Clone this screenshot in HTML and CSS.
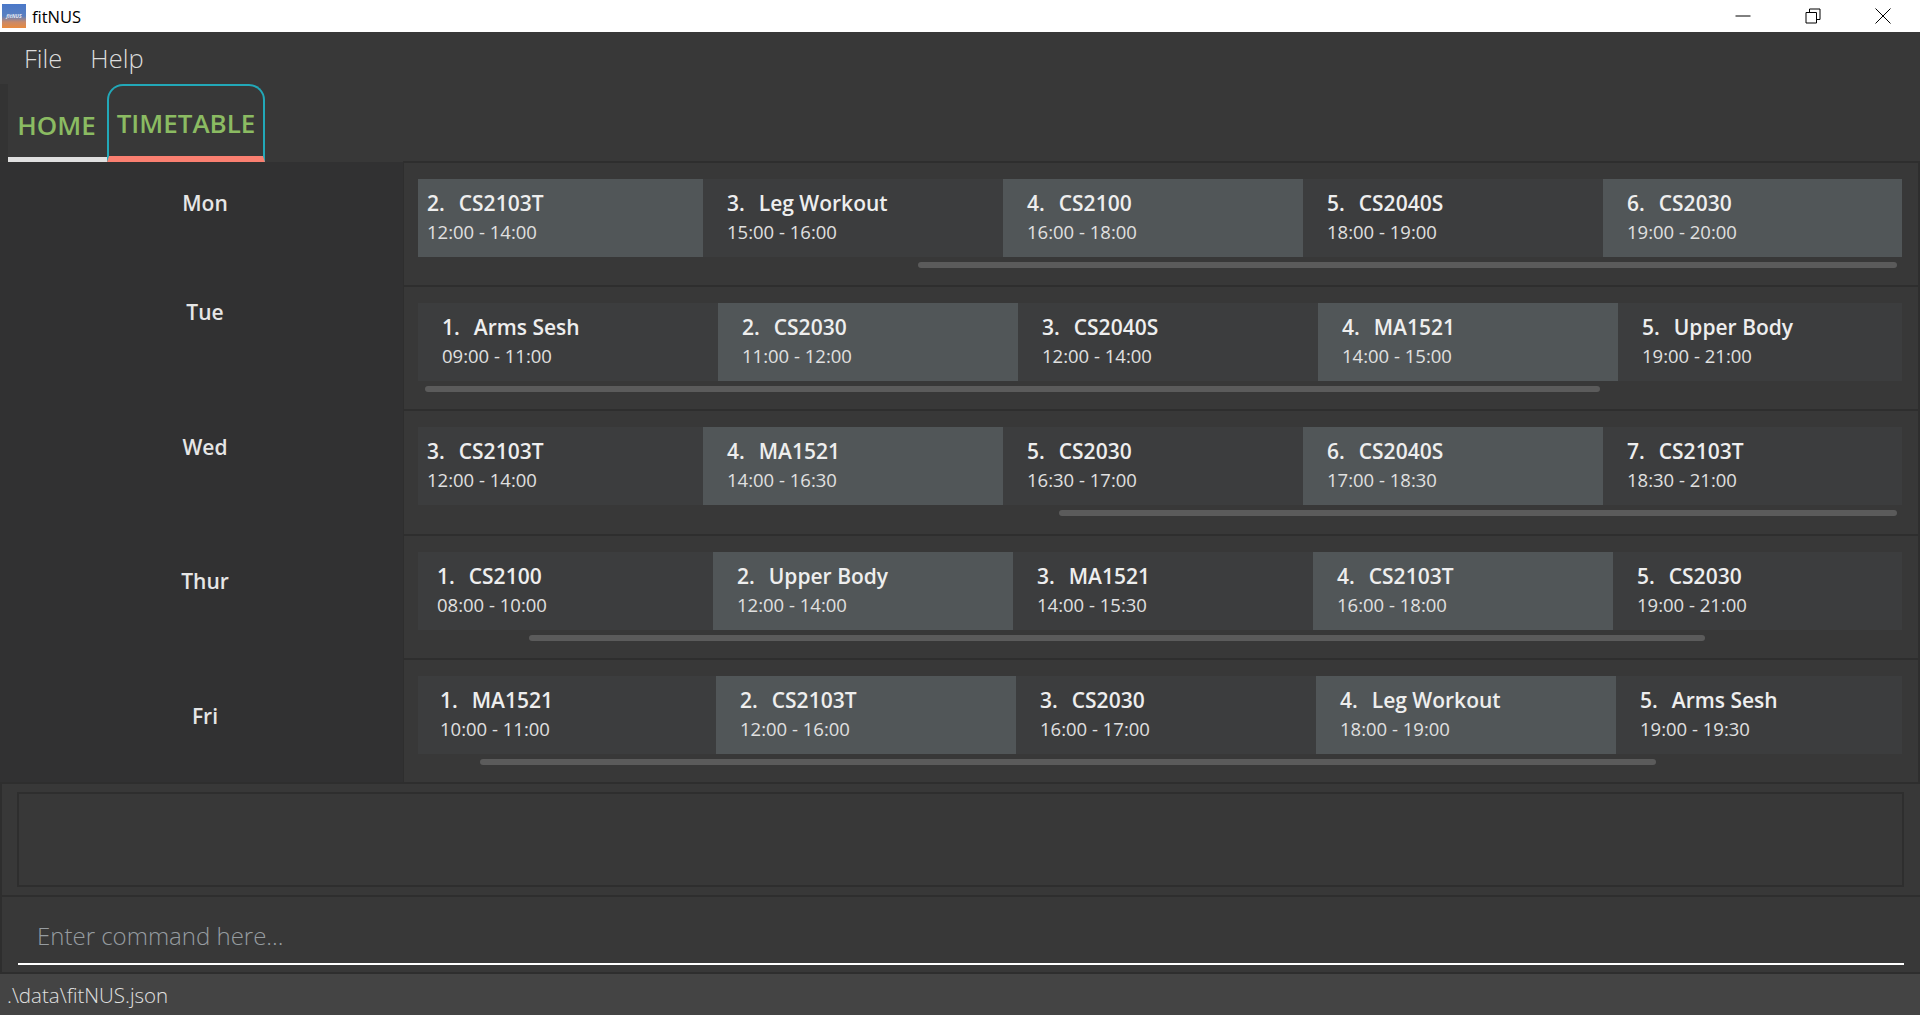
FILE: index.html
```html
<!DOCTYPE html>
<html lang="en">
<head>
    <meta charset="UTF-8">
    <title>fitNUS</title>
    <link rel="stylesheet" href="styles.css">
</head>
<body>
    <div class="titlebar">
        <div class="app-icon"><span>fitNUS</span></div>
        <div class="app-name">fitNUS</div>
        <div class="win-buttons">
            <svg class="win-btn" width="16" height="16" viewBox="0 0 16 16"><path d="M0.5 8H15.5" stroke="#000" fill="none"/></svg>
            <svg class="win-btn" width="16" height="16" viewBox="0 0 16 16"><path d="M1 4.5H11.5V15H1ZM4.5 4.5V1H15V11.5H11.5" stroke="#000" fill="none"/></svg>
            <svg class="win-btn" width="16" height="16" viewBox="0 0 16 16"><path d="M0.5 0.5L15.5 15.5M15.5 0.5L0.5 15.5" stroke="#000" fill="none"/></svg>
        </div>
    </div>

    <div class="menubar">
        <span class="menu-item">File</span>
        <span class="menu-item">Help</span>
    </div>

    <div class="tabbar">
        <div class="tab tab-home"><span>HOME</span></div>
        <div class="tab tab-active"><span>TIMETABLE</span></div>
    </div>

    <div class="main">
        <div class="days">
            <div class="day day-first">Mon</div>
            <div class="day">Tue</div>
            <div class="day">Wed</div>
            <div class="day">Thur</div>
            <div class="day">Fri</div>
        </div>

        <div class="rows">
            <div class="row">
                <div class="viewport">
                    <div class="strip" style="margin-left: -15px">
                        <div class="card light"><div class="title"><span class="num">2.</span>CS2103T</div><div class="time">12:00 - 14:00</div></div>
                        <div class="card"><div class="title"><span class="num">3.</span>Leg Workout</div><div class="time">15:00 - 16:00</div></div>
                        <div class="card light"><div class="title"><span class="num">4.</span>CS2100</div><div class="time">16:00 - 18:00</div></div>
                        <div class="card"><div class="title"><span class="num">5.</span>CS2040S</div><div class="time">18:00 - 19:00</div></div>
                        <div class="card light"><div class="title"><span class="num">6.</span>CS2030</div><div class="time">19:00 - 20:00</div></div>
                    </div>
                </div>
                <div class="track"><div class="thumb" style="margin-left: 500px; width: 979px"></div></div>
            </div>

            <div class="row">
                <div class="viewport">
                    <div class="strip" style="margin-left: 0">
                        <div class="card"><div class="title"><span class="num">1.</span>Arms Sesh</div><div class="time">09:00 - 11:00</div></div>
                        <div class="card light"><div class="title"><span class="num">2.</span>CS2030</div><div class="time">11:00 - 12:00</div></div>
                        <div class="card"><div class="title"><span class="num">3.</span>CS2040S</div><div class="time">12:00 - 14:00</div></div>
                        <div class="card light"><div class="title"><span class="num">4.</span>MA1521</div><div class="time">14:00 - 15:00</div></div>
                        <div class="card"><div class="title"><span class="num">5.</span>Upper Body</div><div class="time">19:00 - 21:00</div></div>
                    </div>
                </div>
                <div class="track"><div class="thumb" style="margin-left: 7px; width: 1175px"></div></div>
            </div>

            <div class="row">
                <div class="viewport">
                    <div class="strip" style="margin-left: -15px">
                        <div class="card"><div class="title"><span class="num">3.</span>CS2103T</div><div class="time">12:00 - 14:00</div></div>
                        <div class="card light"><div class="title"><span class="num">4.</span>MA1521</div><div class="time">14:00 - 16:30</div></div>
                        <div class="card"><div class="title"><span class="num">5.</span>CS2030</div><div class="time">16:30 - 17:00</div></div>
                        <div class="card light"><div class="title"><span class="num">6.</span>CS2040S</div><div class="time">17:00 - 18:30</div></div>
                        <div class="card"><div class="title"><span class="num">7.</span>CS2103T</div><div class="time">18:30 - 21:00</div></div>
                    </div>
                </div>
                <div class="track"><div class="thumb" style="margin-left: 641px; width: 838px"></div></div>
            </div>

            <div class="row">
                <div class="viewport">
                    <div class="strip" style="margin-left: -5px">
                        <div class="card"><div class="title"><span class="num">1.</span>CS2100</div><div class="time">08:00 - 10:00</div></div>
                        <div class="card light"><div class="title"><span class="num">2.</span>Upper Body</div><div class="time">12:00 - 14:00</div></div>
                        <div class="card"><div class="title"><span class="num">3.</span>MA1521</div><div class="time">14:00 - 15:30</div></div>
                        <div class="card light"><div class="title"><span class="num">4.</span>CS2103T</div><div class="time">16:00 - 18:00</div></div>
                        <div class="card"><div class="title"><span class="num">5.</span>CS2030</div><div class="time">19:00 - 21:00</div></div>
                    </div>
                </div>
                <div class="track"><div class="thumb" style="margin-left: 111px; width: 1176px"></div></div>
            </div>

            <div class="row">
                <div class="viewport">
                    <div class="strip" style="margin-left: -2px">
                        <div class="card"><div class="title"><span class="num">1.</span>MA1521</div><div class="time">10:00 - 11:00</div></div>
                        <div class="card light"><div class="title"><span class="num">2.</span>CS2103T</div><div class="time">12:00 - 16:00</div></div>
                        <div class="card"><div class="title"><span class="num">3.</span>CS2030</div><div class="time">16:00 - 17:00</div></div>
                        <div class="card light"><div class="title"><span class="num">4.</span>Leg Workout</div><div class="time">18:00 - 19:00</div></div>
                        <div class="card"><div class="title"><span class="num">5.</span>Arms Sesh</div><div class="time">19:00 - 19:30</div></div>
                    </div>
                </div>
                <div class="track"><div class="thumb" style="margin-left: 62px; width: 1176px"></div></div>
            </div>
        </div>
    </div>

    <div class="result-pane">
        <div class="result-box"></div>
    </div>

    <div class="command-pane">
        <div class="command-box">Enter command here...</div>
    </div>

    <div class="statusbar">.\data\fitNUS.json</div>
</body>
</html>
```

FILE: styles.css
```css
html, body {
    margin: 0;
    height: 100%;
}

body {
    display: flex;
    flex-direction: column;
    height: 1015px;
    overflow: hidden;
    background-color: #383838;
    font-family: "Open Sans", "Noto Sans", sans-serif;
    color: #e4e4e4;
}

/* window title */
.titlebar {
    display: flex;
    align-items: center;
    height: 32px;
    padding-left: 2px;
    background-color: #fff;
    color: #000;
    flex-shrink: 0;
}
.app-icon {
    display: flex;
    align-items: center;
    justify-content: center;
    width: 24px;
    height: 24px;
    background: linear-gradient(#4a78c9 0%, #5a80c0 50%, #c98a6a 75%, #e88a3e 100%);
}
.app-icon span {
    font-size: 5px;
    font-style: italic;
    font-weight: 700;
    color: #e8e8f0;
}
.app-name {
    margin-left: 6px;
    font-size: 16.5px;
}
.win-buttons {
    display: flex;
    margin-left: auto;
    margin-right: 29px;
    gap: 54px;
}
.win-btn {
    display: block;
}

/* menu */
.menubar {
    display: flex;
    align-items: center;
    gap: 28px;
    height: 52px;
    padding-left: 24px;
    flex-shrink: 0;
    font-size: 25.5px;
    font-weight: 300;
    color: #dcdcdc;
}

/* tabs */
.tabbar {
    display: flex;
    height: 78px;
    padding-left: 8px;
    flex-shrink: 0;
    box-shadow: inset 8px 0 0 #333;
}
.tab {
    box-sizing: border-box;
    display: flex;
    justify-content: center;
    font-size: 26px;
    font-weight: 600;
    color: #8bbb62;
}
.tab-home {
    width: 99px;
    align-items: center;
    padding: 9px 2px 0 0;
    border-bottom: 5px solid #e0e0e0;
}
.tab-active {
    width: 158px;
    align-items: center;
    padding-top: 4px;
    border: 2px solid #22a8b8;
    border-bottom: 6px solid #fa7f70;
    border-radius: 16px 16px 0 0;
}

/* timetable */
.main {
    display: grid;
    grid-template-columns: 403px minmax(0, 1fr);
    grid-template-rows: 622px;
    flex-shrink: 0;
}
.days {
    box-sizing: border-box;
    padding-top: 29px;
    background-color: #313132;
    border-bottom: 2px solid #2e2e2e;
    overflow: hidden;
}
.day {
    height: 24px;
    line-height: 24px;
    margin-bottom: 110.5px;
    text-align: center;
    font-size: 21px;
    font-weight: 600;
    padding-left: 7px;
    color: #e6e6e6;
}
.day-first {
    margin-bottom: 85px;
}
.rows {
    display: flex;
    flex-direction: column;
    border-top: 2px solid #2e2e2e;
    border-right: 2px solid #2e2e2e;
    margin-top: -1px;
}
.row {
    box-sizing: border-box;
    flex: 1;
    min-width: 0;
    padding: 16px 16px 0 14px;
    border-bottom: 2px solid #2e2e2e;
    border-left: 1px solid #2e2e2e;
}
.viewport {
    overflow: hidden;
}
.strip {
    display: flex;
}
.card {
    box-sizing: border-box;
    width: 300px;
    height: 78px;
    flex-shrink: 0;
    padding: 9px 0 0 24px;
    background-color: #3c3d3e;
}
.card.light {
    background-color: #515658;
}
.title {
    font-size: 21px;
    line-height: 30px;
    font-weight: 600;
    color: #eeeeee;
}
.num {
    margin-right: 14px;
}
.time {
    font-size: 18.5px;
    line-height: 28px;
    color: #e0e0e0;
}
.track {
    height: 6px;
    margin-top: 5px;
}
.thumb {
    height: 6px;
    border-radius: 3px;
    background-color: #5b5b5b;
}

/* result + command */
.result-pane {
    box-sizing: border-box;
    height: 113px;
    padding: 8px 16px 0 17px;
    border-left: 2px solid #2e2e2e;
    border-bottom: 2px solid #2e2e2e;
    flex-shrink: 0;
}
.result-box {
    box-sizing: border-box;
    height: 95px;
    margin-left: -2px;
    border: 2px solid #2e2e2e;
}
.command-pane {
    box-sizing: border-box;
    height: 77px;
    padding: 0 16px 7px 16px;
    border-left: 2px solid #2e2e2e;
    border-bottom: 2px solid #2e2e2e;
    flex-shrink: 0;
    display: flex;
}
.command-box {
    flex: 1;
    display: flex;
    align-items: center;
    padding: 11px 0 0 19px;
    border-bottom: 2px solid #fff;
    font-size: 24px;
    font-weight: 300;
    color: #969ca0;
}
.statusbar {
    flex: 1;
    display: flex;
    align-items: center;
    padding-left: 7px;
    background-color: #444;
    font-size: 20.5px;
    font-weight: 300;
    color: #e0e0e0;
}
```
